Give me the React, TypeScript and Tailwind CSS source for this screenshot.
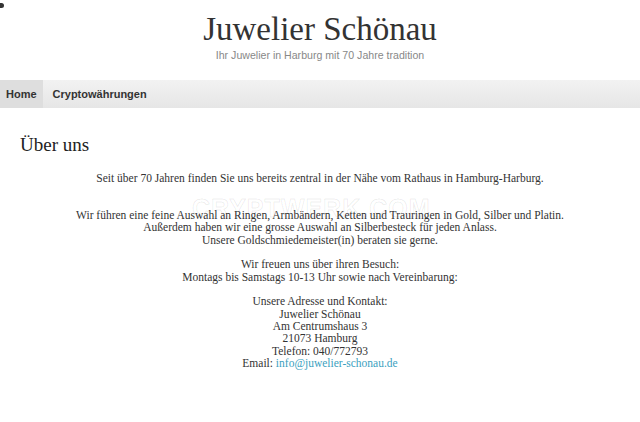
export default function App() {
  const serif = { fontFamily: '"Liberation Serif", serif' }
  return (
    <div className="relative min-h-[422px] bg-white">
      <div className="absolute left-0 top-[3px] h-[5px] w-[4px] rounded-r-full bg-[#333]" />
      <header className="flex flex-col items-center pt-[10px] pb-[18px]">
        <h1 className="text-[33px] leading-[38px] text-[#333]" style={serif}>
          Juwelier Schönau
        </h1>
        <p className="text-[10.6px] leading-[14px] text-[#888]" style={{ fontFamily: '"Liberation Sans", sans-serif' }}>
          Ihr Juwelier in Harburg mit 70 Jahre tradition
        </p>
      </header>
      <nav
        className="flex h-[28px] items-stretch bg-gradient-to-b from-[#f2f2f2] to-[#e6e6e6] text-[11px] font-bold text-[#333]"
        style={{ fontFamily: '"Liberation Sans", sans-serif' }}
      >
        <a className="flex items-center bg-[#dedede] px-[6px]">Home</a>
        <a className="flex items-center px-[10px]">Cryptowährungen</a>
      </nav>
      <main className="px-[20px] pt-[26px] text-[#333]" style={serif}>
        <h2 className="text-[19px] leading-[22px] text-[#222]">Über uns</h2>
        <div className="mt-[16px] text-center text-[11.5px] leading-[12.35px]">
          <p>Seit über 70 Jahren finden Sie uns bereits zentral in der Nähe vom Rathaus in Hamburg-Harburg.</p>
          <br />
          <br />
          <p>Wir führen eine feine Auswahl an Ringen, Armbändern, Ketten und Trauringen in Gold, Silber und Platin.</p>
          <p>Außerdem haben wir eine grosse Auswahl an Silberbesteck für jeden Anlass.</p>
          <p>Unsere Goldschmiedemeister(in) beraten sie gerne.</p>
          <br />
          <p>Wir freuen uns über ihren Besuch:</p>
          <p>Montags bis Samstags 10-13 Uhr sowie nach Vereinbarung:</p>
          <br />
          <p>Unsere Adresse und Kontakt:</p>
          <p>Juwelier Schönau</p>
          <p>Am Centrumshaus 3</p>
          <p>21073 Hamburg</p>
          <p>Telefon: 040/772793</p>
          <p>
            Email: <a className="text-[#3b9fc0]">info@juwelier-schonau.de</a>
          </p>
        </div>
      </main>
      <div
        className="pointer-events-none absolute left-[192px] top-[190px] text-[25px] font-bold tracking-[1px] text-transparent"
        style={{ fontFamily: '"Liberation Sans", sans-serif', WebkitTextStroke: '1px rgba(0,0,0,0.08)' }}
      >
        CRYPTWERK.COM
      </div>
    </div>
  )
}
